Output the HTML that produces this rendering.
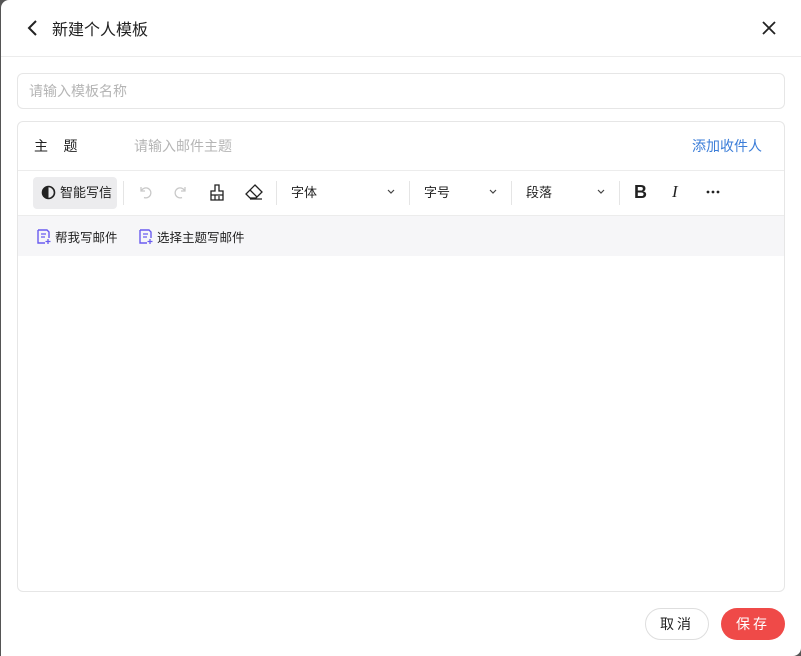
<!DOCTYPE html>
<html><head><meta charset="utf-8"><style>
*{box-sizing:border-box;margin:0;padding:0}
body{width:801px;height:656px;background:#555;font-family:"Liberation Sans","Noto Sans CJK SC",sans-serif;position:relative;overflow:hidden}
.m{position:absolute;left:1px;top:0;width:800px;height:656px;background:#fff;border-radius:8px 0 8px 0}
.a{position:absolute}
.t{font-size:16px;color:#222}
.ph{color:#b5b5b5;font-size:14px}
.sep{position:absolute;top:181px;width:1px;height:24px;background:#e5e5e5}
.tb{position:absolute;top:182px;font-size:13px;color:#222}
.chev{position:absolute;top:189px}
</style></head><body>
<div class="m">
<svg class="a" style="left:24px;top:19px" width="16" height="18" viewBox="0 0 16 18"><path d="M11 2L4 9l7 7" fill="none" stroke="#222" stroke-width="2"/></svg>
<div class="a t" style="left:51px;top:16px">新建个人模板</div>
<svg class="a" style="left:760px;top:20px" width="16" height="16"><path d="M2 2l12 12M14 2L2 14" stroke="#222" stroke-width="1.8"/></svg>
<div class="a" style="left:0;top:56px;width:800px;height:1px;background:#ececec"></div>
<div class="a" style="left:16px;top:73px;width:768px;height:36px;border:1px solid #e6e6e6;border-radius:6px"></div>
<div class="a ph" style="left:28px;top:81px">请输入模板名称</div>
<div class="a" style="left:16px;top:121px;width:768px;height:471px;border:1px solid #e6e6e6;border-radius:6px;overflow:hidden">
 <div class="a" style="left:0;top:48px;width:768px;height:1px;background:#ececec"></div>
 <div class="a" style="left:0;top:93px;width:768px;height:41px;background:#f6f6f8;border-top:1px solid #ececec"></div>
</div>
<div class="a" style="left:33px;top:136px;font-size:14px;color:#222">主&nbsp;&nbsp;&nbsp;&nbsp;题</div>
<div class="a ph" style="left:133px;top:136px">请输入邮件主题</div>
<div class="a" style="left:691px;top:136px;font-size:14px;color:#3b7dd8">添加收件人</div>
<div class="a" style="left:32px;top:177px;width:84px;height:32px;background:#ececee;border-radius:4px"></div>
<svg class="a" style="left:40px;top:185px" width="15" height="15"><circle cx="7.5" cy="7.5" r="6" fill="none" stroke="#222" stroke-width="1.6"/><path d="M7.5 1.5a6 6 0 0 0 0 12z" fill="#222"/></svg>
<div class="tb" style="left:59px">智能写信</div>
<div class="sep" style="left:122px"></div>
<svg class="a" style="left:137px;top:185px" width="14" height="14"><path d="M3 2v4h4M3.5 5.5A5 5 0 1 1 6 12.5" fill="none" stroke="#c8c8c8" stroke-width="1.3"/></svg>
<svg class="a" style="left:173px;top:185px" width="14" height="14"><path d="M11 2v4H7M10.5 5.5A5 5 0 1 0 8 12.5" fill="none" stroke="#c8c8c8" stroke-width="1.3"/></svg>
<svg class="a" style="left:208px;top:184px" width="16" height="17"><path d="M6 1h4v6h4v9H2V7h4z" fill="none" stroke="#222" stroke-width="1.3"/><path d="M2 11h12M6 11v5M10 12v4" stroke="#222" stroke-width="1.2"/></svg>
<svg class="a" style="left:244px;top:184px" width="18" height="16"><path d="M10 1l7 7-6 6H5L1 10z M5 6l7 7M5 15h12" fill="none" stroke="#222" stroke-width="1.3"/></svg>
<div class="sep" style="left:275px"></div>
<div class="tb" style="left:290px">字体</div>
<svg class="chev" style="left:386px" width="8" height="6"><path d="M1 1l3 3 3-3" fill="none" stroke="#444" stroke-width="1.2"/></svg>
<div class="sep" style="left:408px"></div>
<div class="tb" style="left:423px">字号</div>
<svg class="chev" style="left:488px" width="8" height="6"><path d="M1 1l3 3 3-3" fill="none" stroke="#444" stroke-width="1.2"/></svg>
<div class="sep" style="left:510px"></div>
<div class="tb" style="left:525px">段落</div>
<svg class="chev" style="left:596px" width="8" height="6"><path d="M1 1l3 3 3-3" fill="none" stroke="#444" stroke-width="1.2"/></svg>
<div class="sep" style="left:618px"></div>
<div class="a" style="left:633px;top:182px;font-size:18px;font-weight:bold;color:#222">B</div>
<div class="a" style="left:671px;top:182px;font-size:17px;font-style:italic;font-family:'Liberation Serif',serif;color:#222">I</div>
<svg class="a" style="left:705px;top:190px" width="14" height="4"><circle cx="2" cy="2" r="1.4" fill="#222"/><circle cx="7" cy="2" r="1.4" fill="#222"/><circle cx="12" cy="2" r="1.4" fill="#222"/></svg>
<svg class="a" style="left:36px;top:229px" width="14" height="15"><path d="M1 1h9l2 2v6M1 1v13h7" fill="none" stroke="#6a5cf0" stroke-width="1.4"/><path d="M4 5h5M4 8h4M11 10v5M8.5 12.5h5" stroke="#6a5cf0" stroke-width="1.3"/></svg>
<div class="a" style="left:54px;top:227px;font-size:12.5px;color:#222">帮我写邮件</div>
<svg class="a" style="left:138px;top:229px" width="14" height="15"><path d="M1 1h9l2 2v6M1 1v13h7" fill="none" stroke="#6a5cf0" stroke-width="1.4"/><path d="M4 5h5M4 8h4M11 10v5M8.5 12.5h5" stroke="#6a5cf0" stroke-width="1.3"/></svg>
<div class="a" style="left:156px;top:227px;font-size:12.5px;color:#222">选择主题写邮件</div>
<div class="a" style="left:644px;top:608px;width:64px;height:32px;border:1px solid #dedede;border-radius:16px;text-align:center;line-height:30px;font-size:14px;color:#222;letter-spacing:3px">取消</div>
<div class="a" style="left:720px;top:608px;width:64px;height:32px;background:#ef4a48;border-radius:16px;text-align:center;line-height:32px;font-size:14px;color:#fff;letter-spacing:3px">保存</div>
</div>
</body></html>
